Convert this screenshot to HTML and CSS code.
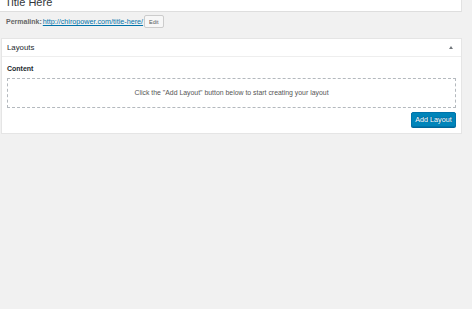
FILE: index.html
```html
<!DOCTYPE html>
<html lang="en">
<head>
  <meta charset="UTF-8">
  <meta name="viewport" content="width=device-width, initial-scale=1.0">
  <title>Edit Page</title>
  <link rel="stylesheet" href="styles.css">
</head>
<body>

  <div class="wrap">
    <div class="title-input">Title Here</div>

    <div class="permalink">
      <strong>Permalink:</strong>
      <a href="#">http://chiropower.com/title-here/</a>
      <button class="edit-btn">Edit</button>
    </div>

    <div class="postbox">
      <div class="postbox-header">
        <h2>Layouts</h2>
        <span class="toggle"></span>
      </div>
      <div class="inside">
        <div class="field-label">Content</div>
        <div class="empty-layout">Click the "Add Layout" button below to start creating your layout</div>
        <div class="actions">
          <button class="add-btn">Add Layout</button>
        </div>
      </div>
    </div>
  </div>

</body>
</html>
```

FILE: styles.css
```css
body {
  margin: 0;
  background: #f1f1f1;
  font-family: 'Liberation Sans', Arial, sans-serif;
  color: #444;
}
.wrap {
  width: 462px;
}
.title-input {
  margin-top: -7px;
  height: 18px;
  line-height: 18px;
  padding-left: 5px;
  font-size: 11px;
  color: #32373c;
  background: #fff;
  border-bottom: 1px solid #dedede;
  border-right: 1px solid #e2e2e2;
}
.permalink {
  display: flex;
  align-items: center;
  gap: 1px;
  margin-top: 3px;
  padding-left: 6px;
  height: 13px;
  font-size: 7px;
  color: #666;
}
.permalink a {
  font-size: 7.2px;
  color: #0073aa;
}
.edit-btn {
  height: 13px;
  padding: 0 4px;
  font-family: inherit;
  font-size: 5.5px;
  color: #555;
  background: #f7f7f7;
  border: 1px solid #ccc;
  border-radius: 2px;
}
.postbox {
  margin-top: 10px;
  margin-left: 1px;
  background: #fff;
  border: 1px solid #e5e5e5;
}
.postbox-header {
  display: flex;
  justify-content: space-between;
  align-items: center;
  height: 17px;
  padding: 0 8px 0 5px;
  border-bottom: 1px solid #eee;
}
.postbox-header h2 {
  margin: 0;
  font-size: 7.8px;
  font-weight: normal;
  color: #23282d;
}
.toggle {
  width: 0;
  height: 0;
  border-left: 2px solid transparent;
  border-right: 2px solid transparent;
  border-bottom: 3px solid #72777c;
}
.inside {
  padding: 7px 5px 6px;
}
.field-label {
  height: 9px;
  line-height: 9px;
  font-size: 7px;
  font-weight: bold;
  color: #23282d;
}
.empty-layout {
  margin-top: 5px;
  height: 28px;
  line-height: 28px;
  text-align: center;
  font-size: 6.9px;
  color: #555;
  border: 1px dashed #b4b9be;
}
.actions {
  display: flex;
  justify-content: flex-end;
  margin-top: 4px;
}
.add-btn {
  height: 15px;
  width: 45px;
  padding: 0;
  font-family: inherit;
  font-size: 7.2px;
  color: #fff;
  background: #0085ba;
  border: 1px solid #0073aa;
  border-radius: 2px;
  box-shadow: 0 1px 0 #006799;
  text-shadow: 0 -1px 1px #006799, 1px 0 1px #006799;
}
```
